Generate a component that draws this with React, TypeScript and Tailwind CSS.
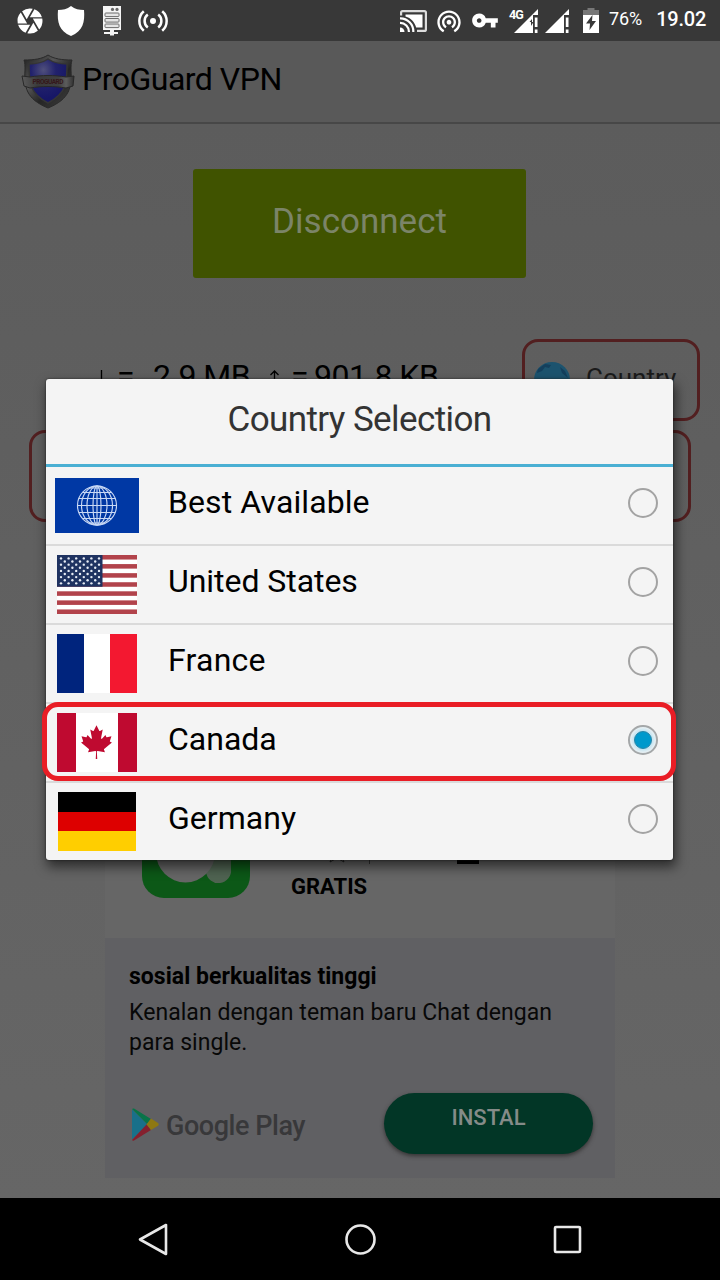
import { MdCamera, MdVpnKey, MdWifiTethering } from "react-icons/md";
import type { ReactNode } from "react";

function CastIcon() {
  return (
    <svg className="h-[22px] w-[27px]" viewBox="0 0 27 22" fill="none" stroke="#fff" strokeWidth="2.200">
      <path d="M1.100 5.500V2.600Q1.100 1.100 2.600 1.100h21.800q1.500 0 1.500 1.500v16.800q0 1.500-1.500 1.500H17" stroke="#dcdcdc" />
      <path d="M5.500 4.500h17v13h-6.300C14.500 12 11 8 5.500 6.500z" fill="#fff" stroke="none" />
      <path d="M0 8.400A13 13 0 0 1 13.300 22M0 12.900A8.800 8.800 0 0 1 8.900 22" />
      <path d="M0 17.500A4.500 4.500 0 0 1 4.500 22H0z" fill="#fff" stroke="none" />
    </svg>
  );
}

function ServerIcon() {
  return (
    <svg className="h-[30px] w-[20px]" viewBox="0 0 20 30">
      <path fill="#f4f4f4" d="M1 0h18v24H12v2h4v2h-4v1.500H8V28H2v-2h6v-2H1z" />
      <g fill="#e4e4e4" stroke="#6a6a6a" strokeWidth="1">
        <rect x="3" y="7" width="14" height="3.600" rx=".8" />
        <rect x="3" y="12.500" width="14" height="3.600" rx=".8" />
        <rect x="3" y="18" width="14" height="3.600" rx=".8" />
      </g>
      <circle cx="10.500" cy="3.400" r="1.600" fill="#666" />
      <circle cx="15" cy="3.400" r="1.600" fill="#666" />
    </svg>
  );
}

function BroadcastIcon() {
  return (
    <svg className="h-[22px] w-[30px]" viewBox="0 0 30 22" fill="none" stroke="#fff" strokeWidth="2.500">
      <circle cx="15" cy="11" r="3" fill="#fff" stroke="none" />
      <path d="M9.800 4.600a8 8 0 0 0 0 12.800M20.200 4.600a8 8 0 0 1 0 12.800M5.800 1.200a13 13 0 0 0 0 19.600M24.200 1.200a13 13 0 0 1 0 19.600" />
    </svg>
  );
}

function SignalIcon({ notch }: { notch?: boolean }) {
  return (
    <svg className="h-[24px] w-[25px]" viewBox="0 0 25 24">
      <path fill="#fff" d="M0 24 24 0V6h-5v18z" />
      <path fill="#fff" d="M20.800 8.500H23.500V18h-2.700zM20.800 20.500h2.700V24h-2.700z" />
      {notch && <path fill="#383838" d="m15.500 13 2.500-3v3h1.500l-2.500 4v-4z" />}
    </svg>
  );
}

function BatteryIcon() {
  return (
    <svg className="h-[25px] w-[16px]" viewBox="0 0 16 25">
      <path fill="#777" d="M4.500 0h7v2H16v6H0V2h4.500z" />
      <path fill="#fff" d="M0 7h16v18H0z" />
      <path fill="#383838" d="M9.500 7 3 15.500h4L6.500 22 13 13H9z" />
    </svg>
  );
}

function ShieldLogo() {
  return (
    <svg className="h-[56px] w-[56px]" viewBox="0 0 56 56">
      <defs>
        <linearGradient id="steel" x1="0" y1="0" x2="1" y2="1">
          <stop offset="0" stopColor="#202020" />
          <stop offset=".35" stopColor="#555" />
          <stop offset=".6" stopColor="#252525" />
          <stop offset="1" stopColor="#404040" />
        </linearGradient>
        <linearGradient id="ribbon" x1="0" y1="0" x2="1" y2="0">
          <stop offset="0" stopColor="#5a5a5a" />
          <stop offset=".3" stopColor="#3a3a3a" />
          <stop offset=".7" stopColor="#3f3f3f" />
          <stop offset=".85" stopColor="#5c5c5c" />
          <stop offset="1" stopColor="#303030" />
        </linearGradient>
        <radialGradient id="blue" cx=".38" cy=".25" r=".65">
          <stop offset="0" stopColor="#50507c" />
          <stop offset=".5" stopColor="#22226c" />
          <stop offset="1" stopColor="#171767" />
        </radialGradient>
      </defs>
      <path d="M28 1c6 4 14 5 24 5-1 3-1 6-1 10 1 17-1 29-23 38C6 45 4 33 5 16c0-4 0-7-1-10 10 0 18-1 24-5z" fill="url(#steel)" stroke="#292929" />
      <path d="M28 5c6 4 12 5 19 5 0 18 0 29-19 39C9 39 9 28 9 10c7 0 13-1 19-5z" fill="url(#blue)" stroke="#353535" strokeWidth="1.500" />
      <path d="m2 22 8 1c12-2 24-2 36 0l8-1-1 10-7 2c-12-2-24-2-36 0l-6-2z" fill="url(#ribbon)" stroke="#282828" />
      <text x="28" y="30" textAnchor="middle" fontSize="6.500" fontWeight="700" fill="#35171a" className="font-['Roboto',sans-serif]" textLength="31">PROGUARD</text>
    </svg>
  );
}

function GlobeFlag() {
  return (
    <svg className="h-[55px] w-[84px]" viewBox="0 0 84 55">
      <path fill="#0038a4" d="M0 0h84v55H0z" />
      <g fill="none" stroke="#c9d9f5" strokeWidth="1.150">
        <circle cx="42" cy="27.500" r="19.500" />
        <ellipse cx="42" cy="27.500" rx="15.500" ry="19.500" />
        <ellipse cx="42" cy="27.500" rx="10" ry="19.500" />
        <ellipse cx="42" cy="27.500" rx="4" ry="19.500" />
        <path d="M42 8v39M22.500 27.500h39M23.800 20.500h36.400M23.800 34.500h36.400M28 14.500h28M28 40.500h28M34 10h16M34 45h16" />
      </g>
    </svg>
  );
}

function UsFlag() {
  const stars: ReactNode[] = [];
  for (let row = 0; row < 9; row++) {
    const count = row % 2 ? 5 : 6;
    for (let col = 0; col < count; col++) {
      stars.push(
        <circle key={`${row}-${col}`} cx={4 + col * 7.6 + (row % 2 ? 3.8 : 0)} cy={3.4 + row * 3.12} r="1.2" fill="#e8edf5" />,
      );
    }
  }
  return (
    <svg className="h-[59px] w-[80px]" viewBox="0 0 80 59">
      <path fill="#fff" d="M0 0h80v59H0z" />
      {[0, 2, 4, 6, 8, 10, 12].map((i) => (
        <rect key={i} y={i * 4.538} width="80" height="4.538" fill="#b2434b" />
      ))}
      <path fill="#1f3361" d="M0 0h45.500v31.800H0z" />
      {stars}
    </svg>
  );
}

function FranceFlag() {
  return (
    <div className="flex h-[59px] w-[80px]">
      <div className="w-[27px] bg-[#00247d]" />
      <div className="w-[26px] bg-white" />
      <div className="w-[27px] bg-[#f31830]" />
    </div>
  );
}

function CanadaFlag() {
  return (
    <svg className="h-[59px] w-[80px]" viewBox="0 0 80 59">
      <path fill="#fff" d="M0 0h80v59H0z" />
      <path fill="#bf0a30" d="M0 0h19v59H0zM61 0h19v59H61z" />
      <path
        fill="#bf0a30"
        transform="translate(-.4 8.900) scale(.00831 .0084)"
        d="m4890 4430-45-863a95 95 0 0 1 111-98l859 151-116-320a65 65 0 0 1 20-73l941-762-212-99a65 65 0 0 1-34-79l186-572-542 115a65 65 0 0 1-73-38l-105-247-423 454a65 65 0 0 1-111-57l204-1052-327 189a65 65 0 0 1-91-27l-332-652-332 652a65 65 0 0 1-91 27l-327-189 204 1052a65 65 0 0 1-111 57l-423-454-105 247a65 65 0 0 1-73 38l-542-115 186 572a65 65 0 0 1-34 79l-212 99 941 762a65 65 0 0 1 20 73l-116 320 859-151a95 95 0 0 1 111 98l-45 863z"
      />
    </svg>
  );
}

function GermanyFlag() {
  return (
    <div className="flex h-[59px] w-[78px] flex-col">
      <div className="h-[20px] bg-black" />
      <div className="h-[19px] bg-[#dd0000]" />
      <div className="h-[20px] bg-[#ffce00]" />
    </div>
  );
}

const countries = [
  { name: "Best Available", flag: <GlobeFlag />, selected: false, spacing: "tracking-[0.1px]" },
  { name: "United States", flag: <UsFlag />, selected: false, spacing: "tracking-[-0.05px]" },
  { name: "France", flag: <FranceFlag />, selected: false, spacing: "tracking-[0.25px]" },
  { name: "Canada", flag: <CanadaFlag />, selected: true, spacing: "tracking-[0px]" },
  { name: "Germany", flag: <GermanyFlag />, selected: false, spacing: "tracking-[0.05px]" },
];

function Radio({ on }: { on: boolean }) {
  return (
    <div className="mt-[-6px] flex h-[30px] w-[30px] items-center justify-center rounded-full border-2 border-[#a3a3a3]">
      {on && <div className="h-[18px] w-[18px] rounded-full border border-[#2886a8] bg-[#0099cc] shadow-[0_0_4px_2px_#b5dff0]" />}
    </div>
  );
}

function StatusBar() {
  return (
    <header className="flex h-[41px] shrink-0 items-center bg-[#383838] text-white">
      <MdCamera className="ml-[15px] h-[30px] w-[30px]" />
      <svg className="ml-[12px] h-[30px] w-[28px]" viewBox="0 0 28 30">
        <path fill="#fff" d="M14 0c4 3 8 4 13 4 1 12-1 21-13 26C2 25 0 16 1 4c5 0 9-1 13-4z" />
      </svg>
      <div className="ml-[17px]"><ServerIcon /></div>
      <div className="ml-[16px]"><BroadcastIcon /></div>
      <div className="ml-[232px]"><CastIcon /></div>
      <MdWifiTethering className="ml-[8px] h-[28px] w-[28px]" />
      <MdVpnKey className="ml-[8px] h-[29px] w-[28px]" />
      <div className="relative ml-[15px]">
        <span className="absolute top-[-1px] left-[-5px] text-[12.5px] leading-[14px] font-bold tracking-[-0.8px]">4G</span>
        <SignalIcon notch />
      </div>
      <div className="ml-[6px]"><SignalIcon /></div>
      <div className="ml-[13px]"><BatteryIcon /></div>
      <span className="mt-[-3px] ml-[10px] text-[18px] leading-[22px] tracking-[-0.1px] whitespace-nowrap">76%</span>
      <span className="mt-[-3px] ml-[14px] text-[20px] leading-[24px] font-medium tracking-[-0.2px] whitespace-nowrap">19.02</span>
    </header>
  );
}

function Advert() {
  return (
    <section className="ml-[105px] w-[510px]">
      <div className="flex h-[158px] bg-[#666666] pl-[37px]">
        <svg className="mt-[10px] h-[108px] w-[108px]" viewBox="0 0 108 108">
          <rect width="108" height="108" rx="22" fill="#0c5817" />
          <path d="M62 60h27v19a12.500 12.500 0 0 1-25 3z" fill="#4f6351" />
          <circle cx="43.500" cy="63" r="29.400" fill="#666" />
        </svg>
        <div className="ml-[41px] flex flex-col pt-[56px]">
          <div className="flex h-[28px] items-end">
            <svg className="ml-[36px] h-[24px] w-[20px]" viewBox="0 0 20 24" fill="none" stroke="#222">
              <path d="m10 4 2.500 7H19l-5 4 3 7-7-4-7 4 3-7-5-4h6.500z" />
            </svg>
            <div className="ml-[22px] h-[26px] w-px bg-[#333]" />
            <div className="ml-[87px] h-[4px] w-[22px] bg-black" />
          </div>
          <div className="mt-[10px] text-[22px] leading-[26px] font-bold text-black">GRATIS</div>
        </div>
      </div>
      <div className="h-[240px] bg-[#606063] px-[24px] pt-[24px] text-black">
        <div className="text-[23px] leading-[30px] font-bold tracking-[0.03px] whitespace-nowrap">sosial berkualitas tinggi</div>
        <div className="mt-[6px] text-[23px] leading-[30px] tracking-[0.04px] whitespace-nowrap text-[#080808]">Kenalan dengan teman baru Chat dengan<br />para single.</div>
        <div className="mt-[35px] flex items-start">
          <svg className="mt-[15px] ml-[3px] h-[33px] w-[27px] shrink-0" viewBox="0 0 27 33">
            <path fill="#19708a" d="M0 1.500v30L15.500 16.500z" />
            <path fill="#087449" d="M0 1Q.8 0 2 .6L19 11l-4 5z" />
            <path fill="#85202e" d="M0 32Q.8 33 2 32.400L19 22l-4-6z" />
            <path fill="#8e7812" d="m19 10.500 7 4.500q1.500 1.300 0 2.700L19 22l-4.500-5.500z" />
          </svg>
          <span className="mt-[17px] ml-[7px] w-[145px] shrink-0 text-[27px] leading-[32px] font-medium tracking-[-0.45px] whitespace-nowrap text-[#38383a]">Google Play</span>
          <div className="ml-[73px] h-[61px] w-[209px] shrink-0 rounded-full bg-[#023626] pt-[11px] text-center text-[22px] leading-[28px] font-medium text-[#858b88] shadow-[0_2px_4px_#333]">INSTAL</div>
        </div>
      </div>
    </section>
  );
}

function CountryDialog() {
  return (
    <div className="absolute top-[379px] left-[46px] w-[627px] rounded-[3px] bg-[#f4f4f4] shadow-[2px_6px_12px_1px_rgba(0,0,0,0.55),0_0_2px_#222]">
      <h2 className="h-[85px] pt-[21px] text-center text-[35px] leading-[40px] tracking-[-0.6px] text-[#333]">Country Selection</h2>
      <div className="h-[3px] bg-[#4aafd3]" />
      <ul className="divide-y-2 divide-[#dadada]">
        {countries.map((c) => (
          <li key={c.name} className="box-content flex h-[77px] items-center pr-[15px]">
            <div className="flex w-[102px] justify-center">{c.flag}</div>
            <span className={`mt-[-8px] ml-[20px] grow text-[32px] leading-[40px] text-black ${c.spacing}`}>{c.name}</span>
            <Radio on={c.selected} />
          </li>
        ))}
      </ul>
      <div className="absolute top-[323px] left-[-4px] h-[79px] w-[634px] rounded-[16px] border-[5px] border-[#e91d25]" />
    </div>
  );
}

export default function App() {
  return (
    <div className="relative flex h-[1280px] w-[720px] flex-col overflow-hidden bg-[#606060] font-['Roboto',sans-serif]">
      <StatusBar />
      <div className="flex h-[83px] shrink-0 items-center border-b-2 border-[#474747] bg-[#595959] pl-[20px]">
        <ShieldLogo />
        <h1 className="mt-[-6px] ml-[6px] text-[32px] leading-[40px] tracking-[-0.5px] whitespace-nowrap text-black">ProGuard VPN</h1>
      </div>
      <main className="flex h-[1074px] shrink-0 flex-col bg-linear-to-b from-[#5c5c5c] via-[#616161] to-[#666666] pt-[45px]">
        <button className="ml-[193px] h-[109px] w-[333px] shrink-0 rounded-[3px] bg-[#405300] pb-[3px] text-[35px] leading-[40px] text-[#7b8468]">Disconnect</button>
        <div className="mt-[61px] flex h-[82px] shrink-0">
          <div className="flex w-[522px] pt-[17px] pl-[97px] text-[32px] leading-[40px] tracking-[-0.5px] whitespace-nowrap text-black">
            <svg className="mt-[14px] h-[18px] w-[9px]" viewBox="0 0 9 18" fill="none" stroke="#000" strokeWidth="1.300">
              <path d="M4.500 0v17M.5 13l4 4 4-4" />
            </svg>
            <span className="ml-[11px] w-[36px]">=</span>
            <span className="w-[117px]">2.9 MB</span>
            <svg className="mt-[14px] h-[18px] w-[9px]" viewBox="0 0 9 18" fill="none" stroke="#000" strokeWidth="1.300">
              <path d="M4.500 18V1M.5 5l4-4 4 4" />
            </svg>
            <span className="ml-[12px] w-[23px]">=</span>
            <span>901.8 KB</span>
          </div>
          <div className="flex w-[178px] rounded-[16px] border-[3px] border-[#521f20] pl-[9px]">
            <svg className="mt-[20px] h-[36px] w-[36px]" viewBox="0 0 36 36">
              <circle cx="18" cy="18" r="18" fill="#1c536e" />
              <path fill="#143f5c" d="m4 7 7-5 6 1-2 3-4-1-3 4-5 2zM26 5l5 4 3 7-6-5z" />
            </svg>
            <span className="mt-[18px] ml-[16px] text-[26px] leading-[36px] text-[#1b1b1b]">Country</span>
          </div>
        </div>
        <div className="mt-[9px] ml-[29px] h-[92px] w-[662px] shrink-0 rounded-[16px] border-[3px] border-[#521f20]" />
        <div className="mt-[258px]"><Advert /></div>
      </main>
      <nav className="flex h-[82px] shrink-0 items-center bg-black">
        <svg className="h-[34px] w-[720px]" viewBox="0 0 720 34" fill="none" stroke="#e8e8e8" strokeWidth="2.600" strokeLinejoin="round">
          <path d="M140 17.500 166 3v29z" />
          <circle cx="360.500" cy="17.500" r="14" />
          <rect x="555" y="5" width="25" height="25" rx="1" />
        </svg>
      </nav>
      <CountryDialog />
    </div>
  );
}
